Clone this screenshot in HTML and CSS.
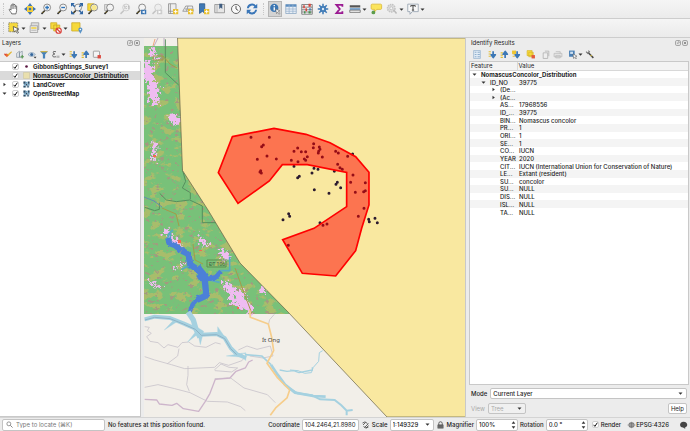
FILE: index.html
```
<!DOCTYPE html>
<html lang="en">
<head>
  <meta charset="UTF-8">
  <meta name="viewport" content="width=device-width, initial-scale=1.0">
  <title>Gibbon Survey</title>
  <link rel="stylesheet" href="styles.css">
</head>
<body>

  <!-- Shared icons -->
  <svg class="sprite" aria-hidden="true">
    <symbol id="lens" viewBox="0 0 16 16">
      <path d="M6.5 10 2 14.5" stroke="#222" stroke-width="2"/>
      <path d="M5 11.5 3.5 13" stroke="#e8c33a" stroke-width="1"/>
      <circle cx="9.5" cy="6" r="4.6" fill="#f4f4f4" stroke="#777" stroke-width="1.1"/>
    </symbol>
    <symbol id="lens-off" viewBox="0 0 16 16">
      <path d="M6.5 10 2 14.5" stroke="#c4c4c4" stroke-width="2"/>
      <circle cx="9.5" cy="6" r="4.6" fill="#eee" stroke="#c8c8c8" stroke-width="1.1"/>
    </symbol>
    <symbol id="expand" viewBox="0 0 16 16">
      <path d="M2 3h4M2 7h4M2 11h4" stroke="#e2bd35" stroke-width="2"/>
      <path d="M10 2v7M6.5 8.5l3.7 5 3.7-5z" stroke="#3d78b5" stroke-width="3" fill="#3d78b5" stroke-linejoin="round"/>
    </symbol>
    <symbol id="collapse" viewBox="0 0 16 16">
      <path d="M2 5h4M2 9h4M2 13h4" stroke="#e2bd35" stroke-width="2"/>
      <path d="M10 14V7M6.5 7.5l3.7-5 3.7 5z" stroke="#3d78b5" stroke-width="3" fill="#3d78b5" stroke-linejoin="round"/>
    </symbol>
    <symbol id="raster" viewBox="0 0 16 16">
      <path d="M1 1h14v14H1z" fill="#d7e6ee"/>
      <path d="M1 1h5v5H1zM6 6h4v4H6zM11 1h4v5h-4zM1 11h5v4H1zM10 10h3v5h-3z" fill="#2b4a63"/>
      <path d="M6 2h4v4H6zM2 7h4v3H2zM11 7h4v3h-4z" fill="#6fa3c4"/>
    </symbol>
    <symbol id="down" viewBox="0 0 6 6"><path d="M.6 1.8h4.8L3 4.6z" fill="#333"/></symbol>
    <symbol id="right" viewBox="0 0 6 6"><path d="M1.8.8v4.4L4.6 3z" fill="#333"/></symbol>
    <symbol id="dock" viewBox="0 0 16 16">
      <rect x="1.5" y="1.5" width="13" height="13" rx="3" fill="none" stroke="#888" stroke-width="2"/>
      <path d="M5 8h3v3M8 5h3v3" fill="none" stroke="#777" stroke-width="1.6"/>
    </symbol>
    <symbol id="close" viewBox="0 0 16 16">
      <rect x="1.5" y="1.5" width="13" height="13" rx="3" fill="none" stroke="#888" stroke-width="2"/>
      <path d="M5 5l6 6M11 5l-6 6" stroke="#666" stroke-width="1.8"/>
    </symbol>
  </svg>

  <!-- Toolbars -->
  <header>
    <div class="toolbar" role="toolbar" aria-label="Navigation">
      <span class="grip"></span>
      <div class="tools tools-nav">
        <button class="tool" aria-label="Pan map"><svg viewBox="0 0 16 16"><path d="M5 14.5C4 12 2 10.500 1.500 9c0-1 1.500-1 2.500.5V3.500c0-1.200 1.600-1.200 1.700 0V2c0-1.300 1.900-1.300 1.900 0v1c.1-1.300 2-1.300 2 0v1.500c.2-1.200 1.900-1.100 1.900.2V10c0 2-.8 3-1 4.500z" fill="#fff" stroke="#444"/><path d="M5.700 4v4M7.600 3v5M9.600 4v4" stroke="#555" stroke-width=".8"/></svg></button>
        <button class="tool" aria-label="Pan to selection"><svg viewBox="0 0 16 16"><path d="M4 4h8v8H4z" fill="#f2cd3a"/><path d="M8 0l3 4H5zM8 16l3-4H5zM0 8l4-3v6zM16 8l-4-3v6z" fill="#3f74b0"/><path d="M6.500 6.500h3v3h-3z" fill="#3f74b0"/></svg></button>
        <button class="tool" aria-label="Zoom in"><svg viewBox="0 0 16 16"><use href="#lens"/><path d="M9.500 3.500v5M7 6h5" stroke="#2f74b8" stroke-width="1.800"/></svg></button>
        <button class="tool" aria-label="Zoom out"><svg viewBox="0 0 16 16"><use href="#lens"/><path d="M7 6h5" stroke="#2f74b8" stroke-width="1.800"/></svg></button>
        <button class="tool" aria-label="Zoom full"><svg viewBox="0 0 16 16"><use href="#lens"/><path d="M0 0h5L0 5zM16 0h-5l5 5zM0 15v-5l5 5zM16 15v-5l-5 5z" fill="#2f66a5"/><path d="M2 2l3 3M14 2l-3 3M14 13l-3-3" stroke="#2f66a5" stroke-width="2"/></svg></button>
        <button class="tool" aria-label="Zoom to selection"><svg viewBox="0 0 16 16"><path d="M1 1h8v9H1z" fill="#f6d93c" stroke="#c9a51f"/><use href="#lens"/><circle cx="9.500" cy="6" r="3.500" fill="#f7e88d"/></svg></button>
        <button class="tool" aria-label="Zoom to layer"><svg viewBox="0 0 16 16"><path d="M2 2h7v8H2z" fill="#ddd" stroke="#aaa"/><use href="#lens"/></svg></button>
        <button class="tool" aria-label="Zoom to native resolution" disabled><svg viewBox="0 0 16 16"><use href="#lens-off"/><path d="M7 4h1v4M12 4h1v4M10 4v1M10 7v1" stroke="#aaa" fill="none"/></svg></button>
        <button class="tool" aria-label="Zoom last"><svg viewBox="0 0 16 16"><use href="#lens"/><path d="M8 9h7v6H8z" fill="#3b76b3"/><path d="M13 10v4l-4-2z" fill="#fff"/></svg></button>
        <button class="tool" aria-label="Zoom next" disabled><svg viewBox="0 0 16 16"><use href="#lens-off"/><path d="M8 9h7v6H8z" fill="#ccc"/><path d="M10 10v4l4-2z" fill="#fff"/></svg></button>
        <button class="tool" aria-label="New map view"><svg viewBox="0 0 16 16"><path d="M2 1h10v13H2zM4.500 1v13M2 11h10" fill="#eee" stroke="#888"/><path d="M8 8h7v7H8z" fill="#e9bf2e"/><path d="M11.500 9v5M9 11.500h5" stroke="#fff" stroke-width="1.300"/></svg></button>
        <button class="tool" aria-label="New 3D map view"><svg viewBox="0 0 16 16"><path d="M1 11 5 4h9l1 7zM4 8h10M8 4 6 11" fill="#eee" stroke="#888"/><path d="M8 8h7v7H8z" fill="#e9bf2e"/><path d="M11.500 9v5M9 11.500h5" stroke="#fff" stroke-width="1.300"/></svg></button>
        <button class="tool" aria-label="New bookmark"><svg viewBox="0 0 16 16"><path d="M2 1h7v13l-3-3-4 3z" fill="#3f78b4" stroke="#2a5787"/><path d="M8 8h7v7H8z" fill="#e9bf2e"/><path d="M11.500 9v5M9 11.500h5" stroke="#fff" stroke-width="1.300"/></svg></button>
        <button class="tool" aria-label="Show bookmarks"><svg viewBox="0 0 16 16"><path d="M1 2h13v11H1z" fill="#e6e6e6" stroke="#888"/><path d="M4 2v11" stroke="#aaa"/><path d="M7 1h4v7L9 6 7 8z" fill="#3f5d80"/></svg></button>
        <button class="tool" aria-label="Temporal controller"><svg viewBox="0 0 16 16"><circle cx="8" cy="8" r="6" fill="#fafafa" stroke="#666" stroke-width="1.300"/><path d="M8 4v4l3 2" fill="none" stroke="#444" stroke-width="1.200"/></svg></button>
        <button class="tool" aria-label="Refresh"><svg viewBox="0 0 16 16"><path d="M2.500 7a5.500 5.500 0 0 1 10-2.500M13.500 9a5.500 5.500 0 0 1-10 2.500" fill="none" stroke="#3a76b8" stroke-width="2.600"/><path d="M15 1v6H9zM1 15V9h6z" fill="#3a76b8"/></svg></button>
      </div>
      <span class="grip"></span>
      <div class="tools">
        <button class="tool pressed" aria-label="Identify features"><svg viewBox="0 0 16 16"><circle cx="7" cy="6.500" r="5.500" fill="#3b76b3"/><path d="M7 5.500v4.500M7 2.800v1.500" stroke="#fff" stroke-width="1.800"/><path d="M9 8l5.500 2.500-2.300.8L14.500 14l-1.300 1-2-2.800L10 14z" fill="#fff" stroke="#666" stroke-width=".8"/></svg></button>
        <button class="tool" aria-label="Open attribute table"><svg viewBox="0 0 16 16"><path d="M1 2h14v12H1z" fill="#e8eef5" stroke="#8aa5c2"/><path d="M1 2h14v3H1z" fill="#5b8dc0"/><path d="M5.500 2v12M10.500 2v12M1 8h14M1 11h14" stroke="#9bb4cf"/></svg></button>
        <button class="tool" aria-label="Field calculator"><svg viewBox="0 0 16 16"><path d="M1 2h14v13H1z" fill="#f1f1f1" stroke="#666"/><path d="M1 5.500h14M1 9h14M1 12h14" stroke="#666"/><path d="M3 3h2v4H3zM10 1h3v4h-3z" fill="#d9443a"/><path d="M6 7h2v4H6z" fill="#d9443a"/><path d="M4 11h2v3H4zM10 11h3v3h-3z" fill="#4b9152"/><path d="M11 7h2v3h-2z" fill="#3b76b3"/></svg></button>
        <button class="tool" aria-label="Processing toolbox"><svg viewBox="0 0 16 16"><circle cx="8" cy="8" r="4" fill="#5b93cb" stroke="#427cb7"/><path d="M8 1v14M1 8h14M3 3l10 10M13 3 3 13" stroke="#427cb7" stroke-width="2"/><circle cx="8" cy="8" r="1.600" fill="#dbe8f5"/></svg></button>
        <button class="tool" aria-label="Statistical summary"><svg viewBox="0 0 16 16"><path d="M12.500 5V2.500H4.500L9 8l-4.500 5.500h8V11" fill="none" stroke="#9b1a92" stroke-width="2.400"/></svg></button>
        <button class="tool menu" aria-label="Measure line"><svg viewBox="0 0 16 16"><path d="M1 3h14v3H1z" fill="#555"/><path d="M1 7h14v2H1z" fill="#5c93c8"/><path d="M1 9.500h14v3H1z" fill="#eee" stroke="#666"/></svg><svg class="arrow"><use href="#down"/></svg></button>
        <button class="tool" aria-label="Map tips"><svg viewBox="0 0 16 16"><path d="M3 1.500h11q1.500 0 1.500 1.500v4q0 1.500-1.500 1.500H9L6 12V8.500H3Q1.500 8.500 1.500 7V3Q1.500 1.500 3 1.500z" fill="#fbe45c" stroke="#d9b62d"/><circle cx="4.500" cy="12.500" r="2.500" fill="#5c9c4c"/></svg></button>
        <button class="tool menu" aria-label="Run feature action" disabled><svg viewBox="0 0 16 16"><circle cx="7" cy="7" r="5" fill="#ddd" stroke="#c4c4c4" stroke-width="2" stroke-dasharray="2 1"/><circle cx="7" cy="7" r="2" fill="#f5f5f5" stroke="#bbb"/><path d="M10 9l4 5" stroke="#bbb" stroke-width="2"/></svg><svg class="arrow"><use href="#down"/></svg></button>
        <button class="tool menu" aria-label="Text annotation"><svg viewBox="0 0 16 16"><path d="M1 1.500h14v10H7L4 15v-3.500H1z" fill="#f7f7f7" stroke="#8c9aa8"/><path d="M5 5V3.500h6V5M8 3.500V9.500M6.500 9.500h3" fill="none" stroke="#333" stroke-width="1.200"/></svg><svg class="arrow"><use href="#down"/></svg></button>
      </div>
    </div>
    <div class="toolbar" role="toolbar" aria-label="Selection">
      <span class="grip"></span>
      <div class="tools">
        <button class="tool menu" aria-label="Select features"><svg viewBox="0 0 16 16"><path d="M1 1h12v12H1z" fill="#f6d93c" stroke="#777" stroke-dasharray="2 1"/><path d="M7 6l7.500 3.500-3 1 2.500 3.500-1.500 1-2.500-3.500-2 2z" fill="#fff" stroke="#444"/></svg><svg class="arrow"><use href="#down"/></svg></button>
        <button class="tool menu" aria-label="Select by value"><svg viewBox="0 0 16 16"><path d="M3 1h10v9H3z" fill="#ddd" stroke="#999"/><path d="M1.500 5h10v9h-10z" fill="#e8e8e8" stroke="#999"/><path d="M3 7h7v2H3z" fill="#f2d23c"/><path d="M3 11h7" stroke="#aaa"/></svg><svg class="arrow"><use href="#down"/></svg></button>
        <button class="tool menu" aria-label="Deselect features"><svg viewBox="0 0 16 16"><path d="M1 1h8v8H1zM5 4h8v8H5z" fill="#f6d93c" stroke="#c9a823"/><circle cx="11.500" cy="11.500" r="3.500" fill="#fff" stroke="#d9413a" stroke-width="1.600"/><path d="M9 9l5 5" stroke="#d9413a" stroke-width="1.600"/></svg><svg class="arrow"><use href="#down"/></svg></button>
        <button class="tool" aria-label="Select by location"><svg viewBox="0 0 16 16"><path d="M1 1h11v11H1z" fill="#f6d93c" stroke="#c9a823"/><path d="M12.500 15.500 10 11a2.700 2.700 0 1 1 5 0z" fill="#5a93c6"/><circle cx="12.500" cy="10" r="1" fill="#fff"/></svg></button>
      </div>
    </div>
  </header>

  <main>
    <!-- Layers -->
    <aside class="panel layers">
      <div class="panel-title">
        <h2>Layers</h2>
        <button aria-label="Float layers"><svg><use href="#dock"/></svg></button>
        <button aria-label="Close layers"><svg><use href="#close"/></svg></button>
      </div>
      <div class="panel-tools">
        <button aria-label="Layer styling"><svg viewBox="0 0 16 16"><path d="M1 8l5 5 4-4-4-3z" fill="#e9692f"/><path d="M7 8l7-6 1 2-6 6z" fill="#e2b632"/><path d="M1 6l4 1-2 3z" fill="#d93f35"/></svg></button>
        <button aria-label="Add group"><svg viewBox="0 0 16 16"><path d="M2 13V6l5-4v11zM7 13V5l5-3v11z" fill="#e4e8ec" stroke="#6f8191"/><path d="M12 9v6M9 12h6" stroke="#5a9a52" stroke-width="2"/></svg></button>
        <button aria-label="Map themes"><svg viewBox="0 0 16 16"><path d="M1 8q6-7 13 0-7 7-13 0z" fill="#dfe9f2" stroke="#5c7f9f"/><circle cx="7.500" cy="8" r="2.800" fill="#35679c"/><path d="M11 12h5l-2.500 3z" fill="#333"/></svg></button>
        <button aria-label="Filter legend"><svg viewBox="0 0 16 16"><path d="M1 2h14l-5 6v7H6V8z" fill="#4682ba"/><path d="M2 2h12v2H2z" fill="#d8b53a"/></svg></button>
        <button class="menu" aria-label="Filter by expression"><svg viewBox="0 0 16 16"><path d="M8 3Q2 1 3 5q0 2 3 2-4 0-4 3 0 4 6 2" fill="none" stroke="#555" stroke-width="1.500"/><path d="M10 10v4M13 10v4" stroke="#888" stroke-width="1.500"/></svg><svg class="arrow"><use href="#down"/></svg></button>
        <button aria-label="Expand all"><svg><use href="#expand"/></svg></button>
        <button aria-label="Collapse all"><svg><use href="#collapse"/></svg></button>
        <button aria-label="Remove layer"><svg viewBox="0 0 16 16"><rect x="1.500" y="2" width="11" height="11" rx="1" fill="#f4f4f4" stroke="#888" stroke-width="1.300"/><path d="M9 9h6v6H9z" fill="#dd4a40"/></svg></button>
      </div>
      <ul class="tree">
        <li><span class="twist"></span><input type="checkbox" id="gibbon" checked><svg class="symbol" viewBox="0 0 16 16"><circle cx="8" cy="8" r="3" fill="#5a1740"/></svg><label for="gibbon">GibbonSightings_Survey1</label></li>
        <li class="selected"><span class="twist"></span><input type="checkbox" id="nomascus" checked><svg class="symbol" viewBox="0 0 16 16"><path d="M1 1h14v14H1z" fill="#e9dfae" stroke="#c6bd92"/></svg><label for="nomascus">NomascusConcolor_Distribution</label></li>
        <li><svg class="twist"><use href="#right"/></svg><input type="checkbox" id="landcover" checked><svg class="symbol"><use href="#raster"/></svg><label for="landcover">LandCover</label></li>
        <li><svg class="twist"><use href="#down"/></svg><input type="checkbox" id="osm" checked><svg class="symbol"><use href="#raster"/></svg><label for="osm">OpenStreetMap</label></li>
      </ul>
    </aside>

    <!-- Map canvas, units are window pixels -->
    <section class="map">
      <svg viewBox="144 38 322 379" preserveAspectRatio="xMinYMin slice" role="img" aria-label="Map of gibbon sightings">
        <defs>
          <filter id="scrub" x="0" y="0" width="100%" height="100%" color-interpolation-filters="sRGB">
            <feTurbulence type="fractalNoise" baseFrequency=".08 .12" numOctaves="5" seed="8"/>
            <feColorMatrix values="0 0 0 0 .66  0 0 0 0 .74  0 0 0 0 .42  12 0 0 0 -6.700"/>
          </filter>
          <filter id="bare" x="0" y="0" width="100%" height="100%" color-interpolation-filters="sRGB">
            <feTurbulence type="fractalNoise" baseFrequency=".2 .26" numOctaves="3" seed="21"/>
            <feColorMatrix values="0 0 0 0 .64  0 0 0 0 .60  0 0 0 0 .50  0 14 0 0 -9.200"/>
          </filter>
          <filter id="ragged" x="-20%" y="-20%" width="140%" height="140%" color-interpolation-filters="sRGB">
            <feTurbulence type="fractalNoise" baseFrequency=".3" numOctaves="3" seed="4"/>
            <feDisplacementMap in="SourceGraphic" scale="14" xChannelSelector="R" yChannelSelector="G"/>
          </filter>
          <filter id="shore" x="-20%" y="-20%" width="140%" height="140%" color-interpolation-filters="sRGB">
            <feTurbulence type="fractalNoise" baseFrequency=".1" numOctaves="3" seed="2"/>
            <feDisplacementMap in="SourceGraphic" scale="8" xChannelSelector="R" yChannelSelector="G"/>
          </filter>
        </defs>

        <rect x="144" y="38" width="322" height="379" fill="#f2efe9"/>

        <!-- land cover raster -->
        <rect x="144" y="46" width="146" height="268" fill="#78c179"/>
        <rect x="144" y="46" width="146" height="268" filter="url(#scrub)"/>
        <rect x="144" y="46" width="146" height="268" filter="url(#bare)"/>
        <g fill="none" stroke="#efbcf1" stroke-linecap="round" stroke-linejoin="round" filter="url(#ragged)">
          <path d="M151 50l4 8" stroke-width="5"/>
          <path d="M147 64l2 14 6 12M153 92l2 8" stroke-width="9"/>
          <path d="M172 118l5 3M177 120h1" stroke-width="7"/>
          <path d="M154 144v6M154 156l1 4" stroke-width="5"/>
          <path d="M166 231l8 10 6 4M200 238l3 4" stroke-width="5"/>
          <path d="M222 251l4 6M226 284l6 8M239 292l6 14M232 299l18 8M238 302l12 8M263 289v0" stroke-width="7"/>
          <path d="M150 282l12 6M209 242l-4 6M190 262l-16 6" stroke-width="2"/>
        </g>
        <path d="M178 240h3v3h-3zM199 250h3v1h-3zM237 307h2v2h-2zM153 155h3v2h-3z" fill="#f26a51"/>
        <g fill="none" stroke="#55905d" transform="translate(143 36) scale(.3333)" stroke-width="3">
          <path d="M67 10v100l40 37M50 472l20 20 30 5 40-5 38 18v50h42M118 400l10 36-10 20 24 14v20M5 514l30 10 14-4v-20"/>
        </g>
        <path d="M144 197l10 4 8 6" fill="none" stroke="#5f8fb0"/>
        <path d="M163 60h-10v-4h10zM163 56l7 8 7 4M162 208l14 6 3 12M193 244l2 16 8 4M235 268l8 22 9 24" fill="none" stroke="#a39b48"/>

        <!-- reservoir -->
        <g transform="translate(143 210) scale(.3333)" fill="none" stroke-linejoin="round">
          <g stroke="#58a9c4" stroke-width="5">
            <path d="M90 60 78 70l-6 22M232 182h28v-42M116 178l20-10M180 205l50 12M140 300l10-25M82 64v40"/>
          </g>
          <g filter="url(#shore)" stroke="#4c80d8">
            <path d="M75 84l4 16 16 6 20 16" stroke-width="17"/>
            <path d="M116 122l20 10 6 32 32 22" stroke-width="19"/>
            <path d="M164 170l20 28 6 58-28 14" stroke-width="19"/>
            <path d="M172 190l12 18" stroke-width="30"/>
            <path d="M190 208l28-6 16-18" stroke-width="14"/>
            <path d="M168 262l-20 22-8 22" stroke-width="12"/>
          </g>
        </g>

        <!-- street map below the raster -->
        <g transform="translate(143 210) scale(.3333)" fill="none" stroke-linejoin="round">
          <g stroke="#c9c4cb" stroke-width="2.500">
            <path d="M5 350l14 2-6 10 12 8-14 10 10 14 24 4 18 16 12-10 30 8 12-14 20-2 18 12 34 4 28-14 16 4"/>
            <path d="M5 440l30 10 50 14 40 12 90-4 14-14 28 8 40-14 8-10"/>
            <path d="M72 462l32-24 4-22M135 468v28l-4 28 8 20"/>
            <path d="M5 532l40-8 50 12 46 12 52 26 60 2 40 14 14 12"/>
            <path d="M215 506l48-2 40 30 70 20 24 24M286 420l26-12 30 10 40-10 8 30-30 6-40-6"/>
            <path d="M214 480l20-18 24 10 26 2-18 12-50-4M376 345l4-16 14-16"/>
          </g>
          <path d="M5 568l36 2 8 12 38 4 14-6 20 16 46 8 20-30 14-24 16-42 44-4 18-20 28-10 10-18 12-6" stroke="#cdb5cb" stroke-width="4"/>
          <path d="M135 306l16 24 8 28 12 24" stroke="#a5d1e0" stroke-width="16"/>
          <path d="M5 328l30-8 46 4 40 16 36 16 18 18 46-2 24 12 18 30 18 18 28 12" stroke="#a5d1e0" stroke-width="12"/>
          <path d="M104 334 64 360l30-32zM160 350l12 54 10-40zM170 368l-36 28 28-36zM246 382l-22-32v26zM250 438l58-10v14zM296 430l12 22 2-20z" fill="#a5d1e0" stroke="#a5d1e0"/>
          <path d="M5 330l30-8 46 4 40 16 36 16 18 18 46-2 24 12 18 30 18 18" stroke="#8fb3c6" stroke-width="3"/>
          <path d="M306 434l50 4 28 26" stroke="#a5d1e0" stroke-width="5"/>
          <path d="M384 464l20 30 22 30 30 24 54 10 38 2" stroke="#a5d1e0" stroke-width="8"/>
          <path d="M410 480l22 4 20-2 16 6 40-8v-8" stroke="#a5d1e0" stroke-width="4"/>
          <path d="M320 300l2 22 54 20 10 40 6 40-20 38 32 44 36 36-8 24-34 30-16 22" stroke="#f6cd8b" stroke-width="5"/>
        </g>
        <g transform="translate(290 240) scale(.3333)" fill="none" stroke="#a5d1e0">
          <path d="M0 446l22 14 44 6 24 12 44 2 20 16 16 16 18-2M170 512v14" stroke-width="6"/>
          <path d="M0 390l24 2 20 8 20-2 6-16 16-18 2-26 10-6" stroke-width="3"/>
        </g>
        <path d="M158 38l-4 8M164 38v8" fill="none" stroke="#bfaec4"/>
        <path d="M155 39l-2 7" stroke="#eda37e"/>
        <text x="262" y="342" class="place">Ít Ong</text>
        <text x="209" y="266" class="road">ĐT 106</text>
        <path d="M207 260h19v7h-19z" fill="none" stroke="#5c8f50"/>

        <!-- distribution range -->
        <path d="M177.500 38 182.500 170.500 208 210 240 263 288 312 387 417H466V38z" fill="#f9e8a0" stroke="#666246" stroke-width=".7"/>

        <!-- sightings, with the identified feature drawn over them -->
        <g transform="translate(210 120) scale(.3333)">
          <path class="dots" d="M123 52h0M178 52h0M155 80h0M160 75h0M142 118h0M171 108h0M199 117h0M150 156h0M152 152h0M154 159h0M244 121h0M252 94h0M263 84h0M274 95h0M287 95h0M264 125h0M283 117h0M287 121h0M292 110h0M311 71h0M310 83h0M328 81h0M330 88h0M326 94h0M325 99h0M337 111h0M377 94h0M385 99h0M413 109h0M428 102h0M383 133h0M390 143h0M397 148h0M373 154h0M429 165h0M422 187h0M466 188h0M436 217h0M461 215h0M466 212h0M462 265h0M445 289h0M252 139h0M263 173h0M268 169h0M306 159h0M312 145h0M324 148h0M313 209h0M357 220h0M378 193h0M382 187h0M392 203h0M219 299h0M236 281h0M239 289h0M330 308h0M339 316h0M351 312h0M235 376h0M476 298h0M478 305h0M495 295h0M502 308h0"/>
          <path d="M67 50 192 25 288 43 360 68 437 110 477 157V255L455 325 437 392 377 468 277 460 218 359 312 325 410 260V157L292 134H217L178 183 84 250 25 158z" fill="red" fill-opacity=".5" stroke="red" stroke-width="5"/>
        </g>
      </svg>
    </section>

    <!-- Identify results -->
    <aside class="panel identify">
      <div class="panel-title">
        <h2>Identify Results</h2>
        <button aria-label="Float results"><svg><use href="#dock"/></svg></button>
        <button aria-label="Close results"><svg><use href="#close"/></svg></button>
      </div>
      <div class="panel-tools">
        <button class="spaced" aria-label="Open form"><svg viewBox="0 0 16 16"><path d="M2 1h12v14H2z" fill="#e1ecf6" stroke="#7fa3c5"/><path d="M4 4h3M4 8h3M4 12h3M9 4h4M9 8h4M9 12h4" stroke="#7fa3c5" stroke-width="1.500"/></svg></button>
        <button aria-label="Expand tree"><svg><use href="#expand"/></svg></button>
        <button aria-label="Collapse tree"><svg><use href="#collapse"/></svg></button>
        <button class="spaced" aria-label="Expand new results"><svg viewBox="0 0 16 16"><use href="#expand"/><path d="M1 1h7v6H1z" fill="#efc52f"/></svg></button>
        <button class="spaced" aria-label="Clear results"><svg viewBox="0 0 16 16"><path d="M1 1h9v9H1zM4 4h8v8H4z" fill="#f6d93c" stroke="#d0ae25"/><path d="M9 9h6v6H9z" fill="#e25b3c"/></svg></button>
        <button aria-label="Copy feature"><svg viewBox="0 0 16 16"><path d="M3 5h8v10H3zM6 2h7v9" fill="#eee" stroke="#aaa" stroke-width="1.300"/></svg></button>
        <button class="spaced" aria-label="Print"><svg viewBox="0 0 16 16"><path d="M1 6h14v6H1zM4 3h8v3M4 10h8v4H4z" fill="#e3e3e3" stroke="#bbb" stroke-width="1.300"/></svg></button>
        <button class="menu" aria-label="Identify mode"><svg viewBox="0 0 16 16"><path d="M1 1h10v11H1z" fill="#4a80b6"/><path d="M3 3h5v4H3z" fill="#cfe0ef"/><path d="M8 7l7 4-3 1 2 3-1 1-3-3-1 2z" fill="#fff" stroke="#555"/></svg><svg class="arrow"><use href="#down"/></svg></button>
        <button aria-label="Settings"><svg viewBox="0 0 16 16"><path d="M5 5l9 9" stroke="#444" stroke-width="2.600"/><path d="M1 3l3 3 3-3-2-2" fill="none" stroke="#777" stroke-width="2"/><path d="M9 9l2 2" stroke="#dfc342" stroke-width="2"/></svg></button>
      </div>
      <div class="results">
        <table>
          <thead><tr><th>Feature</th><th>Value</th></tr></thead>
          <tbody>
            <tr class="layer"><td colspan="2"><svg class="twist"><use href="#down"/></svg>NomascusConcolor_Distribution</td></tr>
            <tr class="feature"><td><svg class="twist"><use href="#down"/></svg>ID_NO</td><td>39775</td></tr>
            <tr class="group"><td><svg class="twist"><use href="#right"/></svg>(De...</td><td></td></tr>
            <tr class="group"><td><svg class="twist"><use href="#right"/></svg>(Ac...</td><td></td></tr>
            <tr><td>AS...</td><td>17968556</td></tr>
            <tr><td>ID_...</td><td>39775</td></tr>
            <tr><td>BIN...</td><td>Nomascus concolor</td></tr>
            <tr><td>PR...</td><td>1</td></tr>
            <tr><td>ORI...</td><td>1</td></tr>
            <tr><td>SE...</td><td>1</td></tr>
            <tr><td>CO...</td><td>IUCN</td></tr>
            <tr><td>YEAR</td><td>2020</td></tr>
            <tr><td>CIT...</td><td>IUCN (International Union for Conservation of Nature)</td></tr>
            <tr><td>LE...</td><td>Extant (resident)</td></tr>
            <tr><td>SU...</td><td>concolor</td></tr>
            <tr><td>SU...</td><td>NULL</td></tr>
            <tr><td>DIS...</td><td>NULL</td></tr>
            <tr><td>ISL...</td><td>NULL</td></tr>
            <tr><td>TA...</td><td>NULL</td></tr>
          </tbody>
        </table>
      </div>
      <div class="options">
        <div class="option">
          <label for="mode">Mode</label>
          <select id="mode" class="wide"><option>Current Layer</option></select>
        </div>
        <div class="option">
          <label for="view" class="off">View</label>
          <select id="view" disabled><option>Tree</option></select>
          <button class="help">Help</button>
        </div>
      </div>
    </aside>
  </main>

  <!-- Status bar -->
  <footer>
    <div class="field search">
      <svg viewBox="0 0 16 16"><circle cx="6.500" cy="6.500" r="4.500" fill="none" stroke="#666" stroke-width="1.500"/><path d="M10 10l5 5" stroke="#666" stroke-width="1.800"/></svg>
      <input type="text" aria-label="Locate" placeholder="Type to locate (⌘K)">
    </div>
    <p class="message">No features at this position found.</p>
    <label for="coordinate">Coordinate</label>
    <input id="coordinate" class="field coordinate" type="text" value="104.2464,21.8980">
    <button class="status-icon" aria-label="Toggle extents"><svg viewBox="0 0 16 16"><path d="M2 4q5-5 10 1M14 12q-5 5-10-1M3 8l5-5M6 13l8-8M9 14l5-5" fill="none" stroke="#444" stroke-width="1.600"/></svg></button>
    <label for="scale">Scale</label>
    <select id="scale" class="scale"><option>1:149329</option></select>
    <button class="status-icon" aria-label="Lock scale"><svg viewBox="0 0 16 16"><path d="M4.500 8V5a3.500 3.500 0 0 1 7 0v3" fill="none" stroke="#555" stroke-width="1.800"/><rect x="2" y="7" width="12" height="8" rx="1" fill="#555"/><path d="M3 10h10M3 12.500h10" stroke="#888"/></svg></button>
    <label for="magnifier">Magnifier</label>
    <input id="magnifier" class="field spin" type="text" value="100%">
    <label for="rotation">Rotation</label>
    <input id="rotation" class="field spin" type="text" value="0.0 °">
    <input type="checkbox" id="render" checked>
    <label for="render">Render</label>
    <button class="crs"><svg viewBox="0 0 16 16"><circle cx="8" cy="8" r="5.500" fill="#aaa" stroke="#777"/><path d="M0 8h16M8 2v12M3 5h10M3 11h10" stroke="#666"/></svg>EPSG:4326</button>
    <button class="status-icon" aria-label="Messages"><svg viewBox="0 0 16 16"><path d="M8 1.500c10 0 9 11 2.500 11.500L12 16 7 13C-1 13-1 1.500 8 1.500z" fill="#444"/></svg></button>
  </footer>

</body>
</html>
```
FILE: styles.css
```
/* Global Styles */
* {
  margin: 0;
  padding: 0;
  box-sizing: border-box;
}

body {
  display: flex;
  flex-direction: column;
  height: 100vh;
  overflow: hidden;
  background-color: #ececec;
  color: #1c1c1c;
  font-family: Inter, 'Liberation Sans', sans-serif;
  font-size: 6px;
  line-height: 7px;
}

button,
input,
select {
  font: inherit;
  color: inherit;
}

button {
  display: flex;
  align-items: center;
  background: none;
  border: none;
}

svg {
  display: block;
  flex: none;
}

.sprite {
  position: absolute;
  width: 0;
  height: 0;
}

/* Toolbars */
.toolbar {
  display: flex;
  align-items: center;
  gap: 3px;
  height: 19px;
  padding-left: 3px;
  background: linear-gradient(#f5f5f5, #ebebeb);
  border-bottom: 1px solid #cdcdcd;
}

.grip {
  width: 1px;
  height: 12px;
  border-left: 1px dotted #c8c8c8;
}

.tools {
  display: flex;
  gap: 2px;
}

.tools-nav {
  width: 252px;
  gap: 0;
  justify-content: space-between;
}

.tools-nav + .grip {
  margin: 0 1px;
}

.tool {
  height: 16px;
}

.tool svg {
  width: 14px;
  height: 12px;
}

.tool .arrow,
.menu .arrow {
  width: 5px;
  height: 5px;
}

.pressed {
  background-color: #d3d3d3;
  outline: 1px solid #b5b5b5;
  outline-offset: -1px;
}

/* Panels */
main {
  display: flex;
  flex: 1;
  min-height: 0;
}

.panel {
  display: flex;
  flex-direction: column;
}

.layers {
  width: 144px;
  padding-right: 3px;
}

.identify {
  width: 224px;
  padding: 0 1px 0 3px;
}

.panel-title {
  display: flex;
  align-items: center;
  gap: 1px;
  height: 9px;
  padding: 0 1px 0 2px;
}

.panel-title h2 {
  flex: 1;
  font-size: 6px;
  font-weight: 400;
}

.panel-title svg {
  width: 6px;
  height: 6px;
}

.panel-tools {
  display: flex;
  align-items: center;
  gap: 2px;
  height: 14px;
  padding-left: 3px;
}

.panel-tools svg {
  width: 10px;
  height: 9px;
}

.panel-tools .spaced {
  margin-right: 3px;
}

/* Layer tree */
.tree {
  flex: 1;
  background-color: #fff;
  border: 1px solid #c9c9c9;
  border-left: none;
  list-style: none;
}

.tree li {
  display: flex;
  align-items: center;
  height: 9px;
  padding-left: 2px;
  font-weight: 700;
}

.tree .selected {
  background-color: #dadada;
}

.tree .selected label {
  text-decoration: underline;
}

.twist {
  width: 5px;
  height: 5px;
}

.symbol {
  width: 7px;
  height: 7px;
  margin: 0 3px 0 4px;
}

input[type="checkbox"] {
  appearance: none;
  flex: none;
  width: 7px;
  height: 7px;
  background: #fff;
  border: 1px solid #cfcfcf;
  border-radius: 2px;
}

input[type="checkbox"]:checked {
  background: #fff url("data:image/svg+xml,%3Csvg xmlns='http://www.w3.org/2000/svg' viewBox='0 0 8 8'%3E%3Cpath d='M1 4.500 3 7 7 1' fill='none' stroke='%23111' stroke-width='1.600'/%3E%3C/svg%3E") center / 5px no-repeat;
}

.tree input {
  margin-left: 5px;
}

/* Map */
.map {
  flex: 1;
  min-width: 0;
  overflow: hidden;
  border-right: 1px solid #c9c9c9;
}

.map svg {
  width: 100%;
  height: 100%;
}

.place {
  font-family: 'Noto Sans', sans-serif;
  font-size: 6px;
  fill: #444;
}

.road {
  font-family: 'Noto Sans', sans-serif;
  font-size: 5px;
  fill: #3c5a35;
}

.dots {
  fill: none;
  stroke: #2b1a2f;
  stroke-width: 9;
  stroke-linecap: round;
}

/* Identify results */
.results {
  flex: 1;
  background-color: #fff;
  border: 1px solid #c9c9c9;
}

.results table {
  width: 100%;
  height: 154px;
  table-layout: fixed;
  border-collapse: collapse;
}

.results th {
  height: 8px;
  padding-left: 1px;
  background-color: #f3f3f3;
  border-bottom: 1px solid #d8d8d8;
  font-weight: 400;
  text-align: left;
}

.results th:first-child {
  width: 47px;
  border-right: 1px solid #d8d8d8;
}

.results td {
  padding-left: 2px;
  font-weight: 500;
  white-space: nowrap;
}

.results td:first-child {
  padding-left: 30px;
}

.results tbody tr:nth-child(even) {
  background-color: #f4f4f4;
}

.results .twist {
  display: inline-block;
  margin-right: 4px;
}

.results .layer td:first-child {
  padding-left: 2px;
  font-weight: 700;
}

.results tbody .feature {
  background-color: #dcdcdc;
}

.results .feature td:first-child {
  padding-left: 11px;
}

.results .group td:first-child {
  padding-left: 21px;
}

/* Mode and view */
.options {
  display: flex;
  flex-direction: column;
  gap: 4px;
  padding: 3px 2px;
}

.option {
  display: flex;
  align-items: center;
  gap: 3px;
}

.option label {
  font-weight: 500;
}

.option .off {
  color: #aaa;
  font-weight: 400;
}

select {
  appearance: none;
  height: 11px;
  padding: 0 12px 0 2px;
  background: #fff url("data:image/svg+xml,%3Csvg xmlns='http://www.w3.org/2000/svg' viewBox='0 0 6 6'%3E%3Cpath d='M.6 1.800h4.800L3 4.600z' fill='%23333'/%3E%3C/svg%3E") right 3px center / 5px no-repeat;
  border: 1px solid #c4c4c4;
  border-radius: 2px;
  font-weight: 500;
}

select:disabled {
  width: 38px;
  background-color: #f0f0f0;
  color: #aaa;
  font-weight: 400;
  opacity: 1;
}

.wide {
  flex: 1;
}

.help {
  height: 11px;
  margin-left: auto;
  padding: 0 2px;
  background-color: #fff;
  border: 1px solid #c4c4c4;
  border-radius: 2px;
}

/* Status bar */
footer {
  display: flex;
  align-items: center;
  gap: 2px;
  height: 14px;
  padding: 0 2px;
  border-top: 1px solid #d4d4d4;
  font-weight: 500;
  white-space: nowrap;
}

.field {
  height: 12px;
  padding: 0 2px;
  background-color: #fff;
  border: 1px solid #c4c4c4;
  border-radius: 2px;
}

.search {
  display: flex;
  align-items: center;
  gap: 3px;
  width: 103px;
  padding: 0 3px;
  font-weight: 400;
}

.search svg {
  width: 7px;
  height: 7px;
}

.search input {
  flex: 1;
  min-width: 0;
  background: none;
  border: none;
  outline: none;
}

.search input::placeholder {
  color: #777;
}

.message {
  flex: 1;
  padding-left: 1px;
}

.coordinate {
  width: 57px;
  font-weight: 400;
}

.scale {
  width: 44px;
  height: 12px;
}

.spin {
  width: 42px;
  padding-right: 8px;
  background: #fff url("data:image/svg+xml,%3Csvg xmlns='http://www.w3.org/2000/svg' viewBox='0 0 6 12'%3E%3Cpath d='M.8 4.500h4.400L3 1.500zM.8 7.500h4.400L3 10.500z' fill='%23333'/%3E%3C/svg%3E") right 1px center / 5px 10px no-repeat;
}

.status-icon svg,
.crs svg {
  width: 9px;
  height: 8px;
}

#render {
  margin-left: 2px;
}

.crs {
  margin: 0 8px 0 4px;
}
```
